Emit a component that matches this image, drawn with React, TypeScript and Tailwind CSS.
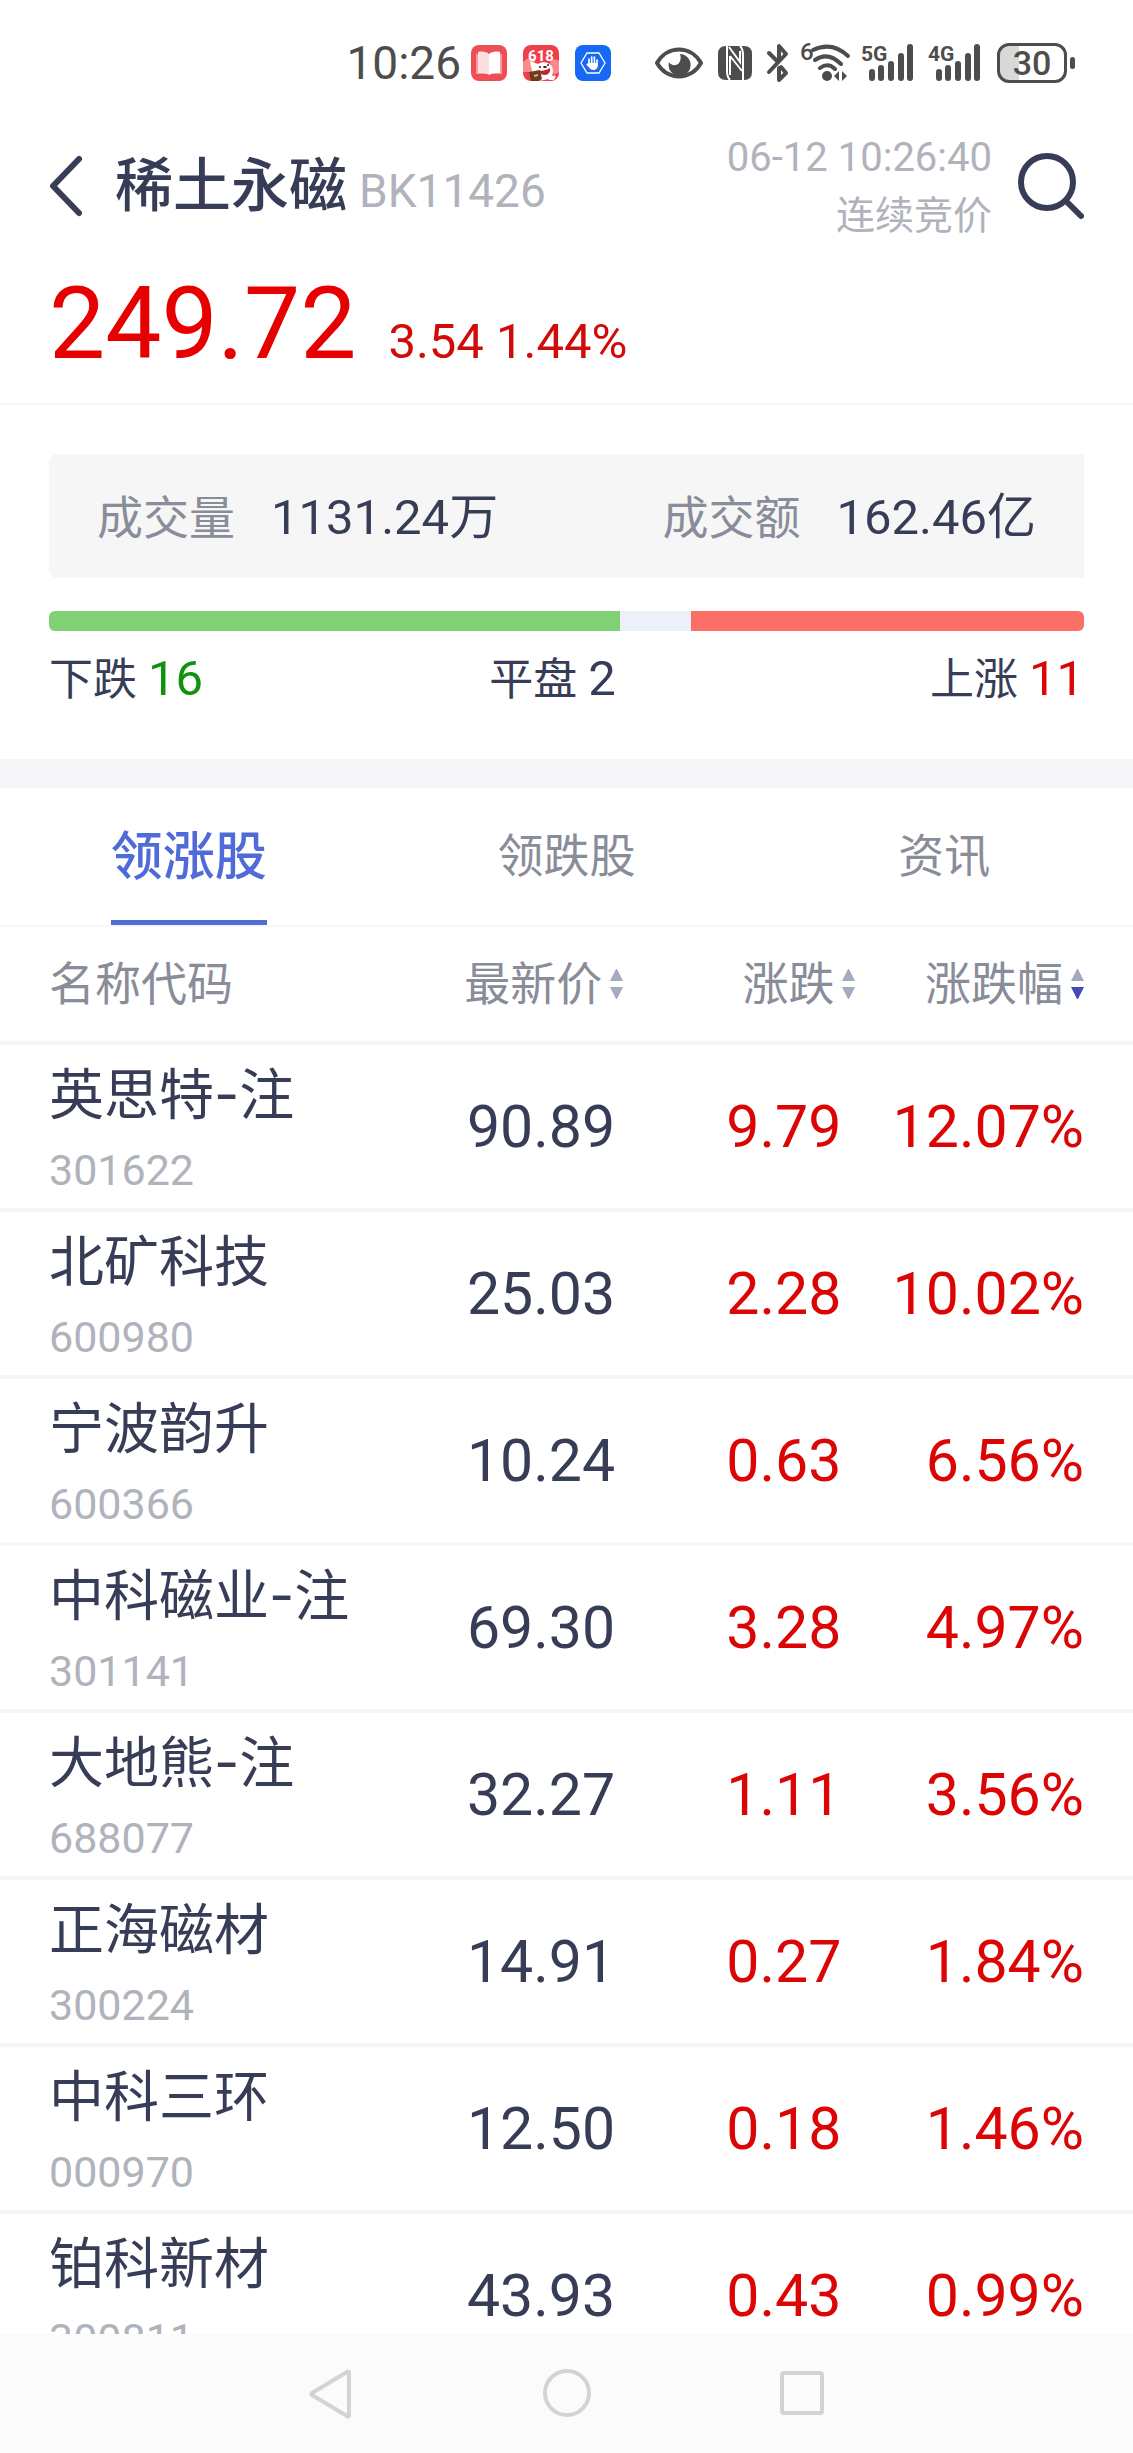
import { ReactNode } from 'react';

interface IStock {
    name: string;
    code: string;
    price: string;
    change: string;
    percent: string;
}

const stocks: IStock[] = [
    { name: '英思特-注', code: '301622', price: '90.89', change: '9.79', percent: '12.07%' },
    { name: '北矿科技', code: '600980', price: '25.03', change: '2.28', percent: '10.02%' },
    { name: '宁波韵升', code: '600366', price: '10.24', change: '0.63', percent: '6.56%' },
    { name: '中科磁业-注', code: '301141', price: '69.30', change: '3.28', percent: '4.97%' },
    { name: '大地熊-注', code: '688077', price: '32.27', change: '1.11', percent: '3.56%' },
    { name: '正海磁材', code: '300224', price: '14.91', change: '0.27', percent: '1.84%' },
    { name: '中科三环', code: '000970', price: '12.50', change: '0.18', percent: '1.46%' },
    { name: '铂科新材', code: '300811', price: '43.93', change: '0.43', percent: '0.99%' },
];

const breadth = { down: 16, flat: 2, up: 11 };

const tabs = ['领涨股', '领跌股', '资讯'];

const Signal = ({ label }: { label: string }) => (
    <svg className="overflow-visible" width="54" height="40" viewBox="0 0 54 40" fill="#4d4d4d">
        <text x="0" y="18" fontSize="21" fontWeight="700" fontFamily="Roboto, sans-serif">{label}</text>
        <rect x="8" y="26" width="6" height="12" rx="3" />
        <rect x="17" y="22" width="6" height="16" rx="3" />
        <rect x="27" y="18" width="6" height="20" rx="3" />
        <rect x="37" y="10" width="6" height="28" rx="3" />
        <rect x="46" y="1" width="6" height="37" rx="3" />
    </svg>
);

const AppIcons = () => (
    <div className="flex items-center gap-4">
        <svg width="36" height="36" viewBox="0 0 36 36">
            <rect width="36" height="36" rx="8" fill="#ee4f55" />
            <path d="M5 9h26v20H5z" fill="#f79da0" />
            <path d="M7 7c5-1 9 0 11 2v21c-3-2-7-2-11-2z" fill="#fbdfe1" />
            <path d="M29 7c-5-1-9 0-11 2v21c3-2 7-2 11-2z" fill="#fff" />
        </svg>
        <svg width="36" height="36" viewBox="0 0 36 36">
            <rect width="36" height="36" rx="8" fill="#ee3f4c" />
            <path d="M0 17c5-5 9-5 12-2v12H0zM36 16c-4-3-8-1-9 2l4 12 5-3z" fill="#f98a8d" />
            <text x="18" y="16" fontSize="15" fontWeight="700" textAnchor="middle" fill="#fff" fontFamily="Roboto, sans-serif">618</text>
            <path d="M7 16l8 3c4-3 12-2 14 3 2 4 1 9-3 12l-10 2-6-8-2-6z" fill="#fff" />
            <path d="M16 26c4 0 8-1 11-3 1 4-2 7-5 7s-5-1-6-4z" fill="#c8232e" />
            <circle cx="17" cy="22" r="1" fill="#222" />
            <circle cx="25" cy="20" r="1" fill="#222" />
            <ellipse cx="22" cy="22" rx="2" ry="1" fill="#222" />
            <path d="M6 27l11-2 2 9-3 2H8z" fill="#6b3a20" />
            <path d="M11 31l4-1" stroke="#e2b25e" strokeWidth="2" />
            <path d="M25 33c2-3 6-3 8-2l-2 4h-5z" fill="#fff" />
        </svg>
        <svg width="36" height="36" viewBox="0 0 36 36">
            <rect width="36" height="36" rx="8" fill="#1768f5" />
            <path d="M12 8h12l6 10-6 10H12L6 18z" fill="none" stroke="#fff" strokeWidth="1.3" />
            <path d="M14 20v-6M16.7 18v-6M19.4 18v-6M22 20v-5" stroke="#fff" strokeWidth="1.7" strokeLinecap="round" />
            <path d="M13.2 18h9.6v3c0 2-2 4-4.5 4-2 0-3.3-1-4.3-2.5l-2.8-3 1-.8z" fill="#fff" />
        </svg>
    </div>
);

const StatusBar = () => (
    <div className="flex h-[126px] shrink-0 items-center justify-end pr-[58px] text-[#4d4d4d]">
        <span className="mr-2.5 text-[46px] leading-[46px]">10:26</span>
        <AppIcons />
        <svg className="ml-11" width="48" height="40" viewBox="0 0 48 40">
            <path d="M2 20C12 2 36 2 46 20C36 38 12 38 2 20z" fill="none" stroke="#4d4d4d" strokeWidth="4" />
            <path d="M25 11a11 11 0 1 1-11 8c2 4 8 4 10 1s2-6 1-9z" fill="#4d4d4d" />
        </svg>
        <svg className="ml-[15px]" width="34" height="40" viewBox="0 0 34 40">
            <path d="M8 3h18q8 0 8 8v18q0 8-8 8H8q-8 0-8-8V11q0-8 8-8z" fill="#4d4d4d" />
            <path d="M9 3v25q0 6 3 9M25 37V12q0-6-3-9" fill="none" stroke="#fff" strokeWidth="2" />
            <path d="M12 13l12 15M12 13v19M22 8v11L11 4" fill="none" stroke="#fff" strokeWidth="2" />
        </svg>
        <svg className="ml-[14px]" width="24" height="40" viewBox="0 0 24 40" fill="none" stroke="#4d4d4d" strokeWidth="4" strokeLinejoin="round" strokeLinecap="round">
            <path d="M3 10l8 8M3 29L20 11l-7-8v13M13 25v12l7-7-5-6" />
        </svg>
        <svg className="ml-[10px] overflow-visible" width="50" height="40" viewBox="0 0 50 40">
            <text x="0" y="17" fontSize="24" fontWeight="500" fill="#4d4d4d" fontFamily="Roboto, sans-serif">6</text>
            <path d="M13 7q19-9 35 6M15 17q13-9 26 4M20 25q8-6 15 1" fill="none" stroke="#4d4d4d" strokeWidth="4" strokeLinecap="round" />
            <circle cx="27" cy="33" r="5" fill="#4d4d4d" />
            <path d="M39 28v10l-5-5zM42 28v10l5-5z" fill="#4d4d4d" />
        </svg>
        <div className="ml-[11px] flex gap-[13px]">
            <Signal label="5G" />
            <Signal label="4G" />
        </div>
        <div className="ml-[15px] flex items-center gap-[3px]">
            <div className="flex h-10 w-[70px] items-center justify-center rounded-xl border-3 border-[#4d4d4d] bg-linear-to-r from-[#d9d9d9] from-30% to-white to-30% text-[34px] leading-[34px] font-medium">
                30
            </div>
            <div className="h-3 w-[5px] rounded-sm bg-[#4d4d4d]" />
        </div>
    </div>
);

const Header = () => (
    <header className="shrink-0 border-b-2 border-[#f6f6f7] px-[49px] pb-[29px]">
        <div className="flex items-center">
            <button aria-label="返回">
                <svg width="34" height="62" viewBox="0 0 34 62" fill="none" stroke="#373d56" strokeWidth="6" strokeLinecap="round" strokeLinejoin="round">
                    <path d="M30 4L4 31l26 27" />
                </svg>
            </button>
            <h1 className="ml-8 text-[58px] leading-[58px] font-medium">稀土永磁</h1>
            <span className="ml-3 pt-2.5 text-[46px] leading-[58px] text-[#b0b2bc]">BK11426</span>
            <div className="ml-auto pt-0.5 text-right text-[40px] leading-[59px] text-[#b0b2bc]">
                <p>06-12 10:26:40</p>
                <p className="text-[39px]">连续竞价</p>
            </div>
            <button className="ml-6" aria-label="搜索">
                <svg width="68" height="68" viewBox="0 0 68 68" fill="none" stroke="#373d56" strokeWidth="6" strokeLinecap="round">
                    <circle cx="31" cy="30" r="26" />
                    <path d="M50 49l15 15" />
                </svg>
            </button>
        </div>
        <div className="flex items-baseline pt-7">
            <span className="text-[100px] leading-[100px] text-[#e60000]">249.72</span>
            <span className="ml-8 text-[49px] leading-[50px] text-[#d10a0a]">3.54 1.44%</span>
        </div>
    </header>
);

const Figure = ({ label, value }: { label: string; value: string }) => (
    <div className="flex items-center gap-9">
        <span className="text-[46px] leading-[60px] text-[#898c99]">{label}</span>
        <span className="text-[49px] leading-[60px]">{value}</span>
    </div>
);

const Summary = () => (
    <section className="shrink-0 px-[49px] pt-[49px] pb-[49px]">
        <div className="flex justify-between rounded-l-lg bg-[#f6f6f7] px-12 pt-[34px] pb-[30px]">
            <Figure label="成交量" value="1131.24万" />
            <Figure label="成交额" value="162.46亿" />
        </div>
        <div className="mt-[33px] flex h-5 overflow-hidden rounded-md bg-[#ebf0f9]">
            <div className="bg-[#80d175]" style={{ flexGrow: breadth.down }} />
            <div style={{ flexGrow: breadth.flat }} />
            <div className="bg-[#fb6f68]" style={{ flexGrow: breadth.up }} />
        </div>
        <div className="mt-[18px] grid grid-cols-[2fr_3fr_2fr] text-[44px] leading-[60px]">
            <p>下跌 <span className="text-[49px] text-[#0f930f]">{breadth.down}</span></p>
            <p className="pr-7 text-center">平盘 <span className="text-[49px]">{breadth.flat}</span></p>
            <p className="text-right">上涨 <span className="text-[49px] text-[#db0505]">{breadth.up}</span></p>
        </div>
    </section>
);

const Tabs = () => (
    <nav className="grid shrink-0 grid-cols-3 border-t-29 border-b-2 border-t-[#f6f6f9] border-b-[#f6f6f7]">
        {tabs.map((tab, idx) => (
            <div key={tab} className="flex h-[137px] justify-center">
                {idx === 0 ? (
                    <button className="border-b-5 border-[#4f6bd8] pt-[7px] text-[52px] font-medium text-[#4f6bd8]">{tab}</button>
                ) : (
                    <button className="text-[46px] text-[#898c99]">{tab}</button>
                )}
            </div>
        ))}
    </nav>
);

const SortHead = ({ children, active = false }: { children: ReactNode; active?: boolean }) => (
    <button className="inline-flex items-center gap-2 align-top whitespace-nowrap">
        {children}
        <svg width="13" height="30" viewBox="0 0 13 30">
            <path d="M6 0h1l6 12H0z" fill="#a3abbf" />
            <path d="M6 30h1l6-12H0z" fill={active ? '#424bb8' : '#a3abbf'} />
        </svg>
    </button>
);

const StockTable = () => (
    <table className="w-full table-fixed border-separate border-spacing-0">
        <thead>
            <tr className="h-[118px] text-right text-[46px] leading-[60px] text-[#898c99] *:border-b-4 *:border-[#f6f6f9] *:p-0 *:font-normal">
                <th className="w-[35%] text-left"><div className="pl-[49px]">名称代码</div></th>
                <th className="w-[20%]"><SortHead>最新价</SortHead></th>
                <th className="w-[20.5%]"><SortHead>涨跌</SortHead></th>
                <th><div className="pr-[49px]"><SortHead active>涨跌幅</SortHead></div></th>
            </tr>
        </thead>
        <tbody>
            {stocks.map((stock) => (
                <tr key={stock.code} className="text-right text-[59px] leading-[76px] *:border-b-4 *:border-[#f6f6f7]">
                    <td className="pt-[11px] pl-[49px] text-left whitespace-nowrap">
                        <p className="font-[Inter,'Noto_Sans_CJK_SC',sans-serif] text-[55px]">{stock.name}</p>
                        <p className="text-[43px] text-[#b0b2bc]">{stock.code}</p>
                    </td>
                    <td className="pr-2">{stock.price}</td>
                    <td className="pr-3.5 text-[#db0505]">{stock.change}</td>
                    <td className="pr-[49px] text-[#db0505]">{stock.percent}</td>
                </tr>
            ))}
        </tbody>
    </table>
);

const NavBar = () => (
    <nav className="flex h-[119px] shrink-0 items-center justify-center gap-[188px] bg-[#fbfbfb]">
        <button aria-label="后退">
            <svg width="48" height="52" viewBox="0 0 48 52" fill="none" stroke="#d3d3d3" strokeWidth="4" strokeLinejoin="round">
                <path d="M42 4v44q-1 1-2 0L5 27q-1-1 0-2L40 4q1-1 2 0z" />
            </svg>
        </button>
        <button aria-label="主页">
            <svg width="48" height="52" viewBox="0 0 48 52" fill="none" stroke="#d3d3d3" strokeWidth="4">
                <circle cx="24" cy="25" r="22" />
            </svg>
        </button>
        <button aria-label="最近任务">
            <svg width="48" height="52" viewBox="0 0 48 52" fill="none" stroke="#d3d3d3" strokeWidth="4">
                <rect x="3" y="5" width="40" height="40" rx="2" />
            </svg>
        </button>
    </nav>
);

export default function App() {
    return (
        <div className="flex h-screen flex-col bg-white font-[Roboto,'Noto_Sans_CJK_SC',sans-serif] text-[#373d56]">
            <StatusBar />
            <Header />
            <Summary />
            <Tabs />
            <main className="min-h-0 flex-1 overflow-hidden">
                <StockTable />
            </main>
            <NavBar />
        </div>
    );
}
